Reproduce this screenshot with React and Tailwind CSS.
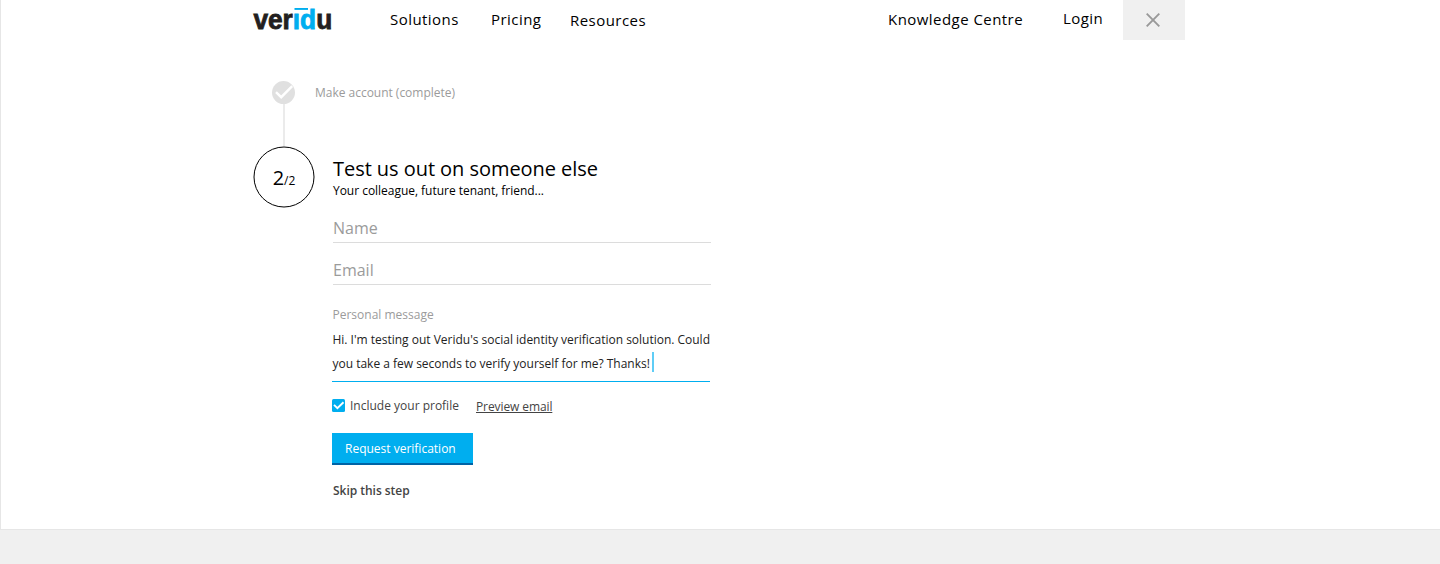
function Logo() {
  return (
    <svg width="84" height="38" viewBox="-1 0 84 38" className="-ml-px shrink-0" aria-label="veridu" fontFamily="'Liberation Sans', Arial, sans-serif" fontWeight="700" fontSize="27" strokeWidth="0.8">
      <text x="0.4" y="28.5" textLength="78.8" lengthAdjust="spacingAndGlyphs" fill="#231f20" stroke="#231f20">
        ver<tspan fill="#00aeef" stroke="#00aeef">ıd</tspan>u
      </text>
      <rect x="41.5" y="8" width="13.5" height="1.9" fill="#00aeef" />
    </svg>
  );
}

function Header() {
  return (
    <header className="flex h-10 text-[15px] leading-5 text-black">
      <div className="w-[137px]">
        <Logo />
      </div>
      <nav className="flex w-[498px] pt-[9px] tracking-[0.45px]">
        <a className="w-[101px]">Solutions</a>
        <a className="w-[79px]">Pricing</a>
        <a className="pt-px">Resources</a>
      </nav>
      <nav className="flex w-[235px] pt-[9px] tracking-[0.45px]">
        <a className="w-[175px] whitespace-nowrap">Knowledge Centre</a>
        <a className="-mt-px">Login</a>
      </nav>
      <button className="flex h-10 w-[62px] items-center justify-center bg-[#f0f0f0]" aria-label="Close">
        <svg width="14" height="14" viewBox="0 0 14 14" stroke="#999" strokeWidth="1.9" className="-ml-0.5">
          <path d="M0.7 0.7 13.3 13.3M13.3 0.7 0.7 13.3" />
        </svg>
      </button>
    </header>
  );
}

function Steps() {
  return (
    <div className="flex w-[62px] flex-col items-center pt-[41px]">
      <svg width="24" height="24" viewBox="0 0 24 24">
        <circle cx="11.5" cy="11.6" r="11.5" fill="#e0e0e0" />
        <path d="M4 11.2 9.2 16.2 20.2 5.2" fill="none" stroke="#fff" strokeWidth="2.4" />
      </svg>
      <div className="-mt-px h-[42px] w-0.5 bg-[#ebebeb]" />
      <div className="relative flex h-[62px] w-[62px] items-baseline justify-center pt-[19px] leading-[26px] text-black">
        <svg className="absolute inset-0" width="62" height="62" viewBox="0 0 62 62">
          <circle cx="31" cy="31" r="30" fill="none" stroke="#000" strokeWidth="1" />
        </svg>
        <span className="text-[20px]">2</span>
        <span className="text-[12px]">/2</span>
      </div>
    </div>
  );
}

function CheckBox() {
  return (
    <svg width="13" height="13" viewBox="0 0 13 13" className="mt-px shrink-0">
      <rect width="13" height="13" rx="1.5" fill="#00aeef" />
      <path d="M2 5.8 5.4 9.2 11.5 3.2" fill="none" stroke="#fff" strokeWidth="1.9" />
    </svg>
  );
}

function Form() {
  return (
    <div className="w-[396px] pt-[45px] text-[12px] leading-4">
      <div className="tracking-[-0.02px] text-[#9b9b9b]">Make account (complete)</div>
      <div className="ml-[17px]">
        <h1 className="mt-[55px] pl-px text-[20px] leading-[25px] tracking-[-0.05px] text-black">Test us out on someone else</h1>
        <p className="mt-0.5 pl-px tracking-[-0.03px] text-black">Your colleague, future tenant, friend...</p>
        <div className="ml-px mt-[18px] h-[26px] w-[378px] border-b border-[#dcdcdc] text-[16px] leading-[22px] text-[#9b9b9b]">Name</div>
        <div className="ml-px mt-4 h-[26px] w-[378px] border-b border-[#dcdcdc] text-[16px] leading-[22px] text-[#9b9b9b]">Email</div>
        <div className="mt-[22px] pl-[0.5px] text-[#9b9b9b]">Personal message</div>
        <div className="mt-[5px] h-[54px] w-[378px] whitespace-nowrap border-b border-[#00aeef] pl-[0.5px] leading-6 tracking-[-0.01px] text-[#222]">
          <div>Hi. I'm testing out Veridu's social identity verification solution. Could</div>
          <div className="flex">
            <span>you take a few seconds to verify yourself for me? Thanks!</span>
            <span className="ml-0.5 h-5 w-0.5 bg-[#5fcdf6]" />
          </div>
        </div>
        <div className="mt-4 flex text-[#444]">
          <CheckBox />
          <span className="ml-[5px] w-[126px]">Include your profile</span>
          <span className="mt-px tracking-[-0.1px] underline underline-offset-1">Preview email</span>
        </div>
        <button className="mt-[18px] flex h-8 w-[141px] border-b-2 border-[#0063a5] bg-[#00aeef] pl-[13px] pt-2 text-white">
          Request verification
        </button>
        <div className="mt-[18px] pl-px font-semibold tracking-[-0.03px] text-[#444]">Skip this step</div>
      </div>
    </div>
  );
}

export default function App() {
  return (
    <div className="h-[564px] w-[1440px] overflow-hidden bg-[#f0f0f0] font-['Open_Sans',sans-serif]">
      <main className="h-[530px] border-b border-l border-[#e6e6e6] bg-white pl-[252px]">
        <Header />
        <div className="flex">
          <Steps />
          <Form />
        </div>
      </main>
    </div>
  );
}
